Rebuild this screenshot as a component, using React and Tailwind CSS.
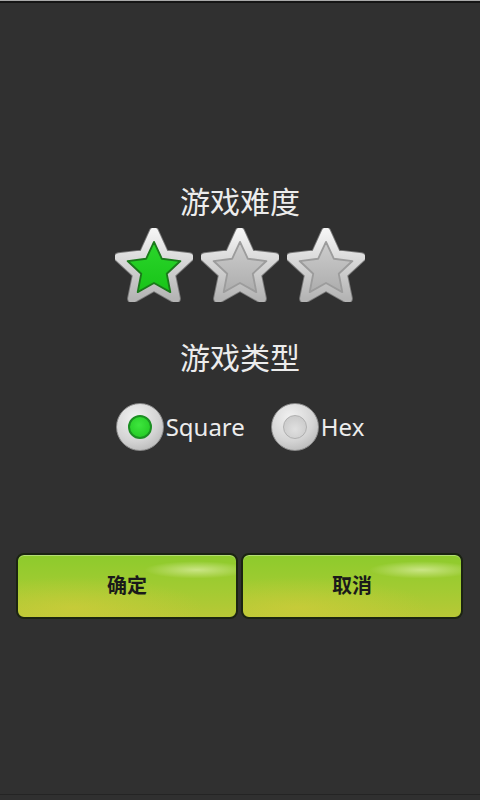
import React from "react";

const OUTER = "50,14 61.17,38.63 88.04,41.64 68.07,59.87 73.51,86.36 50,73 26.49,86.36 31.93,59.87 11.96,41.64 38.83,38.63";
const INNER = "50,25 58.52,43.27 78.53,45.73 63.79,59.48 67.63,79.27 50,69.5 32.37,79.27 36.21,59.48 21.47,45.73 41.48,43.27";

function Star({ on, id }) {
  return (
    <svg width="78" height="74" viewBox="8 10 84 80">
      <defs>
        <linearGradient id={`rim${id}`} x1="0" y1="0" x2="0" y2="1">
          <stop offset="0" stopColor="#f4f4f4" />
          <stop offset="1" stopColor="#b4b4b4" />
        </linearGradient>
        <linearGradient id={`fill${id}`} x1="0" y1="0" x2="0" y2="1">
          {on ? (
            <>
              <stop offset="0" stopColor="#2bd62b" />
              <stop offset="1" stopColor="#18c418" />
            </>
          ) : (
            <>
              <stop offset="0" stopColor="#cdcdcd" />
              <stop offset="1" stopColor="#adadad" />
            </>
          )}
        </linearGradient>
      </defs>
      <polygon points={OUTER} fill="#8c8c8c" stroke="#7a7a7a" strokeWidth="11" strokeLinejoin="round" />
      <polygon points={OUTER} fill={`url(#rim${id})`} stroke={`url(#rim${id})`} strokeWidth="9" strokeLinejoin="round" />
      <polygon
        points={INNER}
        fill={`url(#fill${id})`}
        stroke={on ? "#1a7a1a" : "#9c9c9c"}
        strokeWidth="2"
        strokeLinejoin="round"
      />
    </svg>
  );
}

function Radio({ checked, label }) {
  return (
    <div className="flex items-center">
      <div className="flex h-[48px] w-[48px] items-center justify-center rounded-full border border-[#8a8a8a] bg-[radial-gradient(circle_at_40%_30%,#f2f2f2,#d4d4d4_55%,#a9a9a9)]">
        {checked ? (
          <div className="h-[24px] w-[24px] rounded-full border-2 border-[#1b8f22] bg-[radial-gradient(circle_at_45%_40%,#3ee63e,#1fc41f)]" />
        ) : (
          <div className="h-[24px] w-[24px] rounded-full border border-[#b0b0b0] bg-[radial-gradient(circle_at_50%_60%,#e0e0e0,#c4c4c4)]" />
        )}
      </div>
      <span className="ml-[2px] text-[24px] leading-none text-[#ececec]">{label}</span>
    </div>
  );
}

export default function App() {
  return (
    <div
      className="flex h-[800px] w-[480px] flex-col bg-[#303030]"
      style={{ fontFamily: '"Noto Sans", "Noto Sans CJK SC", sans-serif' }}
    >
      <div className="h-px bg-[#a9a9a9]" />
      <div className="h-[2px] bg-[#151515]" />

      <div className="mt-[181px] h-9 text-center text-[30px] leading-9 text-[#ececec]">游戏难度</div>

      <div className="mt-2 flex justify-center gap-2">
        <Star on id="a" />
        <Star id="b" />
        <Star id="c" />
      </div>

      <div className="mt-[38px] h-9 text-center text-[30px] leading-9 text-[#ececec]">游戏类型</div>

      <div className="mt-[27px] flex justify-center gap-[26px]">
        <Radio checked label="Square" />
        <Radio label="Hex" />
      </div>

      <div className="mt-[102px] grid grid-cols-2 gap-[3px] pl-[16px] pr-[17px]">
        {["确定", "取消"].map((t) => (
          <button
            key={t}
            className="flex h-[66px] items-center justify-center rounded-[8px] border-2 border-[#1b2412] bg-[radial-gradient(ellipse_24%_14%_at_82%_24%,rgba(255,255,220,0.5),transparent),radial-gradient(ellipse_60%_50%_at_25%_85%,rgba(215,205,60,0.55),transparent),linear-gradient(180deg,#8dcb2c,#a2cb32_55%,#b8c836)] text-[20px] font-bold text-[#1a1a1a] shadow-[inset_0_1px_0_rgba(255,255,255,0.35)]"
          >
            {t}
          </button>
        ))}
      </div>

      <div className="mt-auto mb-[5px] h-px bg-[#242424]" />
    </div>
  );
}
